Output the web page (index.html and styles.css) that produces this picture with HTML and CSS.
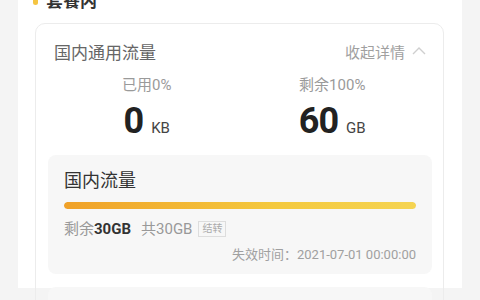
FILE: index.html
```html
<!DOCTYPE html>
<html lang="zh-CN">

<head>
    <meta charset="UTF-8">
    <meta name="viewport" content="width=device-width, initial-scale=1.0">
    <title>套餐内</title>
    <link rel="stylesheet" href="styles.css">
</head>

<body>
    <div class="panel">
        <h2 class="titulo"><span class="ponto"></span>套餐内</h2>

        <div class="card">
            <div class="card-head">
                <span class="card-nome">国内通用流量</span>
                <span class="recolher">收起详情
                    <svg width="16" height="10" viewBox="0 0 16 10">
                        <polyline points="2,8 8,2 14,8" fill="none" stroke="#cfcfcf" stroke-width="1.4" />
                    </svg>
                </span>
            </div>

            <div class="stats">
                <div class="stat">
                    <div class="stat-label">已用0%</div>
                    <div class="stat-valor"><b>0</b><span>KB</span></div>
                </div>
                <div class="stat">
                    <div class="stat-label">剩余100%</div>
                    <div class="stat-valor"><b>60</b><span>GB</span></div>
                </div>
            </div>

            <div class="pacote">
                <div class="pacote-nome">国内流量</div>
                <div class="barra"><div class="barra-fill" style="width: 100%;"></div></div>
                <div class="pacote-info">
                    <span class="resto">剩余<b>30GB</b></span>
                    <span class="total">共30GB</span>
                    <span class="tag">结转</span>
                </div>
                <div class="validade">失效时间：2021-07-01 00:00:00</div>
            </div>

            <div class="pacote pacote-vazio"></div>
        </div>
    </div>
</body>

</html>
```

FILE: styles.css
```css
body {
    font-family: Roboto, "Noto Sans CJK SC", sans-serif;
    background-color: #f4f4f4;
    margin: 0;
    height: 300px;
    overflow: hidden;
}

.panel {
    background: white;
    margin: 0 18px;
    padding: 0 18px 0 17px;
    height: 300px;
}

.titulo {
    display: flex;
    align-items: center;
    margin: -12px 0 0 -2px;
    height: 22px;
    font-size: 17px;
    font-weight: bold;
    color: #333;
}

.ponto {
    width: 5px;
    height: 12px;
    border-radius: 3px;
    background: #f5c542;
    margin-right: 8px;
}

.card {
    margin-top: 13px;
    border: 1px solid #ececec;
    border-radius: 10px;
    padding: 15px 0 0;
}

.card-head {
    display: flex;
    justify-content: space-between;
    align-items: center;
    padding: 0 16px 0 18px;
    height: 24px;
}

.card-nome {
    font-size: 17px;
    color: #666;
}

.recolher {
    display: flex;
    align-items: center;
    gap: 6px;
    font-size: 15px;
    color: #a0a0a0;
}

.stats {
    display: grid;
    grid-template-columns: 1fr 1fr;
    padding: 0 18px;
    margin-top: 13px;
}

.stat {
    text-align: center;
}

.stat-label {
    font-size: 15px;
    color: #9a9a9a;
    line-height: 19px;
}

.stat-valor {
    display: flex;
    justify-content: center;
    align-items: baseline;
    gap: 8px;
    margin-top: 5px;
    height: 40px;
}

.stat-valor b {
    font-size: 36px;
    font-weight: bold;
    color: #222;
    letter-spacing: -1px;
}

.stat-valor span {
    font-size: 15px;
    color: #444;
}

.pacote {
    background: #f7f7f7;
    border-radius: 8px;
    margin: 15px 11px 0 12px;
    padding: 14px 16px 10px;
}

.pacote-nome {
    font-size: 18px;
    color: #333;
    line-height: 24px;
}

.barra {
    margin-top: 9px;
    height: 7px;
    border-radius: 4px;
    background: #eee;
    overflow: hidden;
}

.barra-fill {
    height: 100%;
    border-radius: 4px;
    background: linear-gradient(to right, #f0a128, #f4c93e 60%, #f5d452);
}

.pacote-info {
    display: flex;
    align-items: center;
    margin-top: 11px;
    font-size: 15px;
    color: #999;
    line-height: 18px;
}

.resto b {
    color: #333;
    font-weight: bold;
}

.total {
    margin-left: 10px;
}

.tag {
    margin-left: 6px;
    font-size: 10px;
    line-height: 12px;
    padding: 1px 3px;
    border: 1px solid #ddd;
    color: #aaa;
}

.validade {
    text-align: right;
    margin-top: 8px;
    font-size: 13px;
    color: #a0a0a0;
    line-height: 18px;
}

.pacote-vazio {
    margin-top: 13px;
    height: 40px;
    padding: 0;
}
```
